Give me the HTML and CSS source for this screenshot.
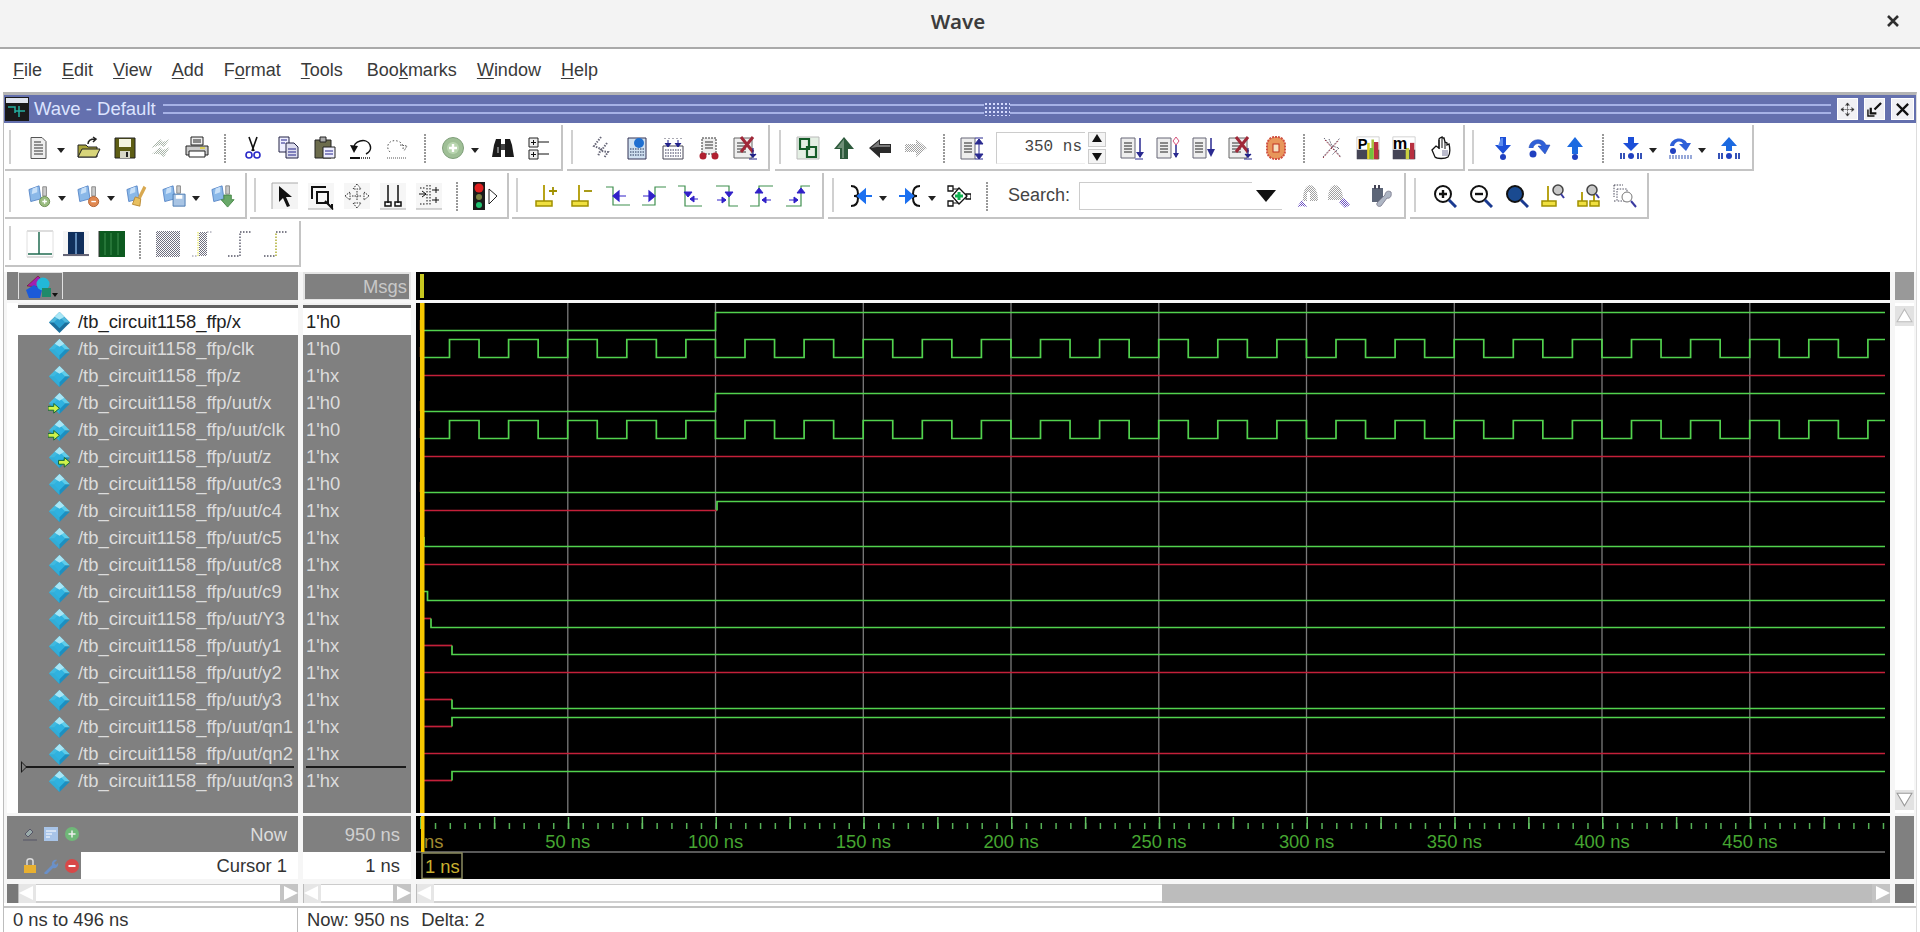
FILE: index.html
```html
<!DOCTYPE html>
<html lang="en">
<head>
<meta charset="utf-8">
<title>Wave</title>
<link rel="stylesheet" href="styles.css">
</head>
<body>
<svg class="defs" aria-hidden="true">
<defs>
<pattern id="dith" width="2" height="2" patternUnits="userSpaceOnUse"><rect width="1" height="1" fill="#6f7080"/><rect x="1" y="1" width="1" height="1" fill="#6f7080"/></pattern>
<pattern id="dithl" width="2" height="2" patternUnits="userSpaceOnUse"><rect width="1" height="1" fill="#a0a0a0"/><rect x="1" y="1" width="1" height="1" fill="#a0a0a0"/></pattern>
<pattern id="dithg" width="2" height="2" patternUnits="userSpaceOnUse"><rect width="1" height="1" fill="#a8b4a8"/><rect x="1" y="1" width="1" height="1" fill="#a8b4a8"/></pattern>
<pattern id="dithp" width="2" height="2" patternUnits="userSpaceOnUse"><rect width="1" height="1" fill="#6a50c0"/><rect x="1" y="1" width="1" height="1" fill="#6a50c0"/></pattern>
<symbol id="doc" viewBox="0 0 24 24"><path d="M4 1.5h11l4 4v17H4z" fill="#eee" stroke="#555"/><path d="M7 6h7M7 9h9M7 12h9M7 15h9M7 18h9" stroke="#333"/></symbol>
<symbol id="open" viewBox="0 0 24 24"><path d="M1 21V9h8l2 2h9v10z" fill="#a9a43a" stroke="#222"/><path d="M1 21l4-8h18l-4 8z" fill="#d8d57a" stroke="#222"/><path d="M11 8c0-4 4-5 7-5M16 1l3 2-3 3" fill="none" stroke="#222" stroke-width="1.5"/></symbol>
<symbol id="save" viewBox="0 0 24 24"><path d="M2 2h20v20H2z" fill="#5d5d14" stroke="#222"/><path d="M6 3h12v8H6z" fill="#f4f4e0"/><path d="M7 15h10v7H7z" fill="#d8d8c8"/><path d="M13 16h2v5h-2z" fill="#222"/></symbol>
<symbol id="reload" viewBox="0 0 24 24"><path d="M2 12l9-9 3 3 7-3-6 8-4-2zM3 18l8-7 3 3 7-3-6 10-5-3z" fill="url(#dithg)"/></symbol>
<symbol id="print" viewBox="0 0 24 24"><path d="M6 1h12v8H6z" fill="#eee" stroke="#222"/><path d="M1 10h22v9H1z" fill="#ccc" stroke="#222"/><path d="M4 15h16v6H4z" fill="#fff" stroke="#222"/><path d="M8 4h8M8 6h8" stroke="#222"/><path d="M15 11h5v2h-5z" fill="#dcd05a"/></symbol>
<symbol id="cut" viewBox="0 0 24 24"><path d="M8 1l5 14M16 1l-5 14" stroke="#111" stroke-width="1.6"/><circle cx="8" cy="19" r="3" fill="none" stroke="#2b2bc8" stroke-width="1.6"/><circle cx="16" cy="19" r="3" fill="none" stroke="#2b2bc8" stroke-width="1.6"/></symbol>
<symbol id="copy" viewBox="0 0 24 24"><path d="M2 1h10v15H2z" fill="#eef" stroke="#224"/><path d="M9 7h8l4 4v11H9z" fill="#dde" stroke="#224"/><path d="M4 4h6M4 7h4M11 13h8M11 16h8M11 19h8" stroke="#228"/></symbol>
<symbol id="paste" viewBox="0 0 24 24"><path d="M2 4h16v18H2z" fill="#6c6c4c" stroke="#222"/><path d="M7 1h6v5H7z" fill="#aaa" stroke="#222"/><path d="M10 11h12v11H10z" fill="#eef" stroke="#222"/><path d="M12 15h8M12 18h8" stroke="#228"/></symbol>
<symbol id="undo" viewBox="0 0 24 24"><path d="M5 13C3 5 18 1 21 9c2 5-2 8-4 9" fill="none" stroke="#111" stroke-width="1.5"/><path d="M1 9l8 1-4 7z" fill="#111"/><path d="M1 22h10" stroke="#111" stroke-width="2"/><path d="M12 22h10" stroke="#555" stroke-dasharray="1 1" stroke-width="2"/></symbol>
<symbol id="redo" viewBox="0 0 24 24"><path d="M18 13C20 5 6 1 3 9c-1 4 1 6 3 8" fill="none" stroke="#555" stroke-dasharray="1.5 2"/><path d="M15 9l7 1-3 5" fill="none" stroke="#555" stroke-dasharray="1.5 1"/><path d="M2 22h20" stroke="#555" stroke-dasharray="1 1"/></symbol>
<symbol id="add" viewBox="0 0 24 24"><circle cx="12" cy="12" r="10.5" fill="#9fbf96" stroke="#7f9f7a"/><circle cx="12" cy="12" r="6" fill="#b9d6b0"/><path d="M12 8v8M8 12h8" stroke="#fff" stroke-width="2.4"/></symbol>
<symbol id="binoc" viewBox="0 0 24 24"><path d="M1 21l2-12 2-6h5v18zM23 21l-2-12-2-6h-5v18z" fill="#1b1b1b"/><path d="M10 8h4v6h-4z" fill="#444"/><path d="M6 11h2v6H6z" fill="#777"/></symbol>
<symbol id="tree" viewBox="0 0 24 24"><path d="M2 2h9v9H2zM2 14h9v9H2z" fill="#eee" stroke="#222"/><path d="M4 6.5h5M6.500 4v5M4 18.500h5M6.500 16v5M11 6h11M11 18h11" stroke="#111"/></symbol>
<symbol id="brk" viewBox="0 0 24 24"><path d="M12 1L5 10l7 3-3 7M18 7l-6 8 7 1-4 6" fill="none" stroke="#667" stroke-dasharray="1.5 1.2" stroke-width="2"/></symbol>
<symbol id="t2" viewBox="0 0 24 24"><path d="M3 2h18v21H3z" fill="#cfe0f0" stroke="#335"/><path d="M5 13h14M5 16h14M5 19h14" stroke="#235" stroke-dasharray="1.500 1"/><circle cx="14" cy="7" r="5" fill="#1f6fd0"/></symbol>
<symbol id="t3" viewBox="0 0 24 24"><path d="M2 10h20v13H2z" fill="#fff" stroke="#445"/><path d="M4 14h16M4 17h16M4 20h16" stroke="#335" stroke-dasharray="1.500 1"/><path d="M4 2v1M8 2v1M12 2v1M16 2v1M20 2v1" stroke="#556"/><path d="M7 4v6M4 7l3 4 3-4M17 4v6M14 7l3 4 3-4" fill="#22228c" stroke="#22228c"/></symbol>
<symbol id="fork" viewBox="0 0 24 24"><path d="M5 2h14v16H5z" fill="#eee" stroke="#333" stroke-dasharray="2 1"/><path d="M8 6h8M8 9h8M8 12h8" stroke="#333"/><circle cx="6" cy="20" r="3.500" fill="#b02030"/><circle cx="18" cy="20" r="3.500" fill="#b02030"/></symbol>
<symbol id="docx" viewBox="0 0 24 24"><path d="M1 2h18v20H1z" fill="#eee" stroke="#666"/><path d="M4 7h8M4 10h9M4 13h9M4 16h9" stroke="#333"/><path d="M8 1l12 15M20 1L8 16" stroke="#a02838" stroke-width="3"/><path d="M20 12v10M17 18l3 3 3-3M16 23h8" fill="#228" stroke="#228" stroke-width="1.200"/></symbol>
<symbol id="chain" viewBox="0 0 24 24"><path d="M1 1h22v22H1z" fill="#e4efe4" stroke="#bbb"/><path d="M4 3h9v10H4zM11 11h9v10h-9z" fill="none" stroke="#145c28" stroke-width="2.200"/></symbol>
<symbol id="up" viewBox="0 0 24 24"><path d="M12 1l10 12h-6v10H8V13H2z" fill="#2d5a3c"/><path d="M12 3L5 12h5v10h2z" fill="#6f8f78"/></symbol>
<symbol id="lf" viewBox="0 0 24 24"><path d="M1 12L12 3v5h11v9H12v5z" fill="#2a2a2a"/><path d="M3 12l8-7v4h11v2H9z" fill="#7a7a7a"/></symbol>
<symbol id="rt" viewBox="0 0 24 24"><path d="M23 12l-11 9v-5H1V8h11V3z" fill="url(#dithl)"/></symbol>
<symbol id="dup" viewBox="0 0 24 24"><path d="M1 2h14v21H1z" fill="#eee" stroke="#667"/><path d="M4 7h8M4 10h8M4 13h8M4 16h8" stroke="#222"/><path d="M19 3v20M15 8l4-5 4 5zM15 18l4 5 4-5z" fill="#2a2a90" stroke="#2a2a90"/><path d="M15 2h8M15 23h8" stroke="#2a2a90"/></symbol>
<symbol id="ddn" viewBox="0 0 24 24"><path d="M1 2h14v20H1z" fill="#eee" stroke="#667"/><path d="M4 7h8M4 10h8M4 13h8M4 16h8" stroke="#222"/><path d="M20 2v19" stroke="#2a2a90" stroke-width="1.500"/><path d="M16 16l4 6 4-6z" fill="#2a2a90"/><path d="M15 23h8" stroke="#2a2a90"/></symbol>
<symbol id="dpk" viewBox="0 0 24 24"><path d="M1 2h14v20H1z" fill="#eee" stroke="#667"/><path d="M4 7h8M4 10h8M4 13h8M4 16h8" stroke="#222"/><path d="M20 1l3 4-3 4-3-4z" fill="#fff" stroke="#d6507a"/><path d="M20 9v12" stroke="#2a2a90" stroke-width="1.500"/><path d="M17 17l3 5 3-5z" fill="#2a2a90"/></symbol>
<symbol id="ddn2" viewBox="0 0 24 24"><path d="M1 2h13v20H1z" fill="#eee" stroke="#667"/><path d="M3 7h8M3 10h8M3 13h8M3 16h8" stroke="#222"/><path d="M19 2v16" stroke="#2a2a90" stroke-width="1.500"/><path d="M15 13l4 8 4-8z" fill="#2a2a90"/></symbol>
<symbol id="org" viewBox="0 0 24 24"><rect x="3" y="1" width="18" height="22" rx="8" fill="#e8965a" stroke="#d05040" stroke-width="2" stroke-dasharray="2 1"/><rect x="9" y="8" width="6" height="8" fill="#f6e0c0" stroke="#c03020"/></symbol>
<symbol id="xd" viewBox="0 0 24 24"><path d="M3 21L20 2M4 2l17 19M9 3l3 7 7 2-7 7" fill="none" stroke="#667" stroke-dasharray="1.500 1"/><path d="M3 22L19 4M5 4l16 18" stroke="#a03040" stroke-dasharray="1.500 1.500"/></symbol>
<symbol id="pch" viewBox="0 0 28 28"><path d="M1 1h26v26H1z" fill="#fff" stroke="#ccc"/><path d="M1 16h26v11H1z" fill="#445"/><path d="M13 8h3v19h-3z" fill="#e0d020"/><path d="M18 4h3v23h-3zM23 10h3v17h-3z" fill="#a8c040"/><path d="M21 7h5v20h-5z" fill="#b83040"/><path d="M16 14h4v13h-4z" fill="#70c040"/><text x="2" y="15" font-family="Liberation Sans,sans-serif" font-size="17" font-weight="700" fill="#000">P</text></symbol>
<symbol id="mch" viewBox="0 0 28 28"><path d="M1 1h26v26H1z" fill="#fff" stroke="#ccc"/><path d="M1 16h26v11H1z" fill="#445"/><path d="M21 8h5v19h-5z" fill="#b83040"/><path d="M16 14h4v13h-4z" fill="#c8d040"/><text x="1" y="15" font-family="Liberation Sans,sans-serif" font-size="19" font-weight="700" fill="#000">m</text></symbol>
<symbol id="hand" viewBox="0 0 24 24"><path d="M4 14l3 7c2 2 10 2 13 0 2-3 2-9 1-13l-2 1V7l-2-1-1-4-2 0v-1l-2 1-1 1v9L8 10z" fill="#fff" stroke="#111" stroke-width="1.300"/><path d="M11 4v9M14 3v9M17 6v7" stroke="#111"/><path d="M14 14h6v6h-6z" fill="#bbc"/></symbol>
<symbol id="bd" viewBox="0 0 24 24"><path d="M9 1h6v8h5L12 18 4 9h5z" fill="#1c4fd8"/><path d="M10 2h2v8H7z" fill="#5d8cf0"/><circle cx="12" cy="21" r="3" fill="#2040c0"/></symbol>
<symbol id="bc" viewBox="0 0 24 24"><path d="M2 12C3 2 16 1 19 9h4l-5 9-7-8h4c-2-4-8-3-9 2" fill="#2f60d8" stroke="#1a3fa8" stroke-width=".5"/><circle cx="6" cy="18" r="3.500" fill="#2040c0"/></symbol>
<symbol id="bu" viewBox="0 0 24 24"><path d="M12 1l8 10h-5v7H9v-7H4z" fill="#1c6ae0"/><circle cx="12" cy="21" r="3" fill="#2040c0"/></symbol>
<symbol id="bdb" viewBox="0 0 24 24"><path d="M9 1h6v6h5l-8 8-8-8h5z" fill="#1c4fd8"/><circle cx="12" cy="20" r="3" fill="#2040c0"/><path d="M2 17v6M5 17v6M19 17v6M22 17v6" stroke="#2040b0" stroke-width="1.800"/></symbol>
<symbol id="bcb" viewBox="0 0 24 24"><path d="M2 10C3 1 16 0 19 7h4l-5 8-7-7h4c-2-4-8-3-9 2" fill="#2f60d8"/><circle cx="5" cy="15" r="3" fill="#2040c0"/><path d="M2 19v4M5 19v4M8 19v4M11 19v4M14 19v4M17 19v4M20 19v4M23 19v4" stroke="#5470c0" stroke-width="1.200"/></symbol>
<symbol id="bub" viewBox="0 0 24 24"><path d="M12 1l8 9h-5v5H9v-5H4z" fill="#1c6ae0"/><circle cx="12" cy="20" r="3" fill="#2040c0"/><path d="M2 17v6M5 17v6M19 17v6M22 17v6" stroke="#2040b0" stroke-width="1.800"/></symbol>
<symbol id="fa" viewBox="0 0 26 26"><path d="M1 6l11-4 2 14-11 3z" fill="#8ab8e8" stroke="#5a88c8"/><path d="M5 5l5-2v6L4 11z" fill="#c8e0f8"/><path d="M16 3h4v10h-4z" fill="#ccc" stroke="#888"/><circle cx="18" cy="19" r="5.500" fill="#9abc80" stroke="#6a8c50"/><path d="M15.500 19h5M18 16.500v5" stroke="#fff" stroke-width="1.500"/></symbol>
<symbol id="fm" viewBox="0 0 26 26"><path d="M1 6l11-4 2 14-11 3z" fill="#8ab8e8" stroke="#5a88c8"/><path d="M5 5l5-2v6L4 11z" fill="#c8e0f8"/><path d="M16 3h4v10h-4z" fill="#ccc" stroke="#888"/><circle cx="18" cy="19" r="5.500" fill="#e08850" stroke="#b06030"/><path d="M15.500 19h5" stroke="#fff" stroke-width="1.500"/></symbol>
<symbol id="fb" viewBox="0 0 26 26"><path d="M1 6l11-4 2 14-11 3z" fill="#8ab8e8" stroke="#5a88c8"/><path d="M5 5l5-2v6L4 11z" fill="#c8e0f8"/><path d="M19 2l3 2-6 12-3-2z" fill="#d8a850"/><path d="M10 14l6 2-1 8-8-2z" fill="#e8c060" stroke="#b88830"/></symbol>
<symbol id="fs" viewBox="0 0 26 26"><path d="M1 6l11-4 2 14-11 3z" fill="#8ab8e8" stroke="#5a88c8"/><path d="M5 5l5-2v6L4 11z" fill="#c8e0f8"/><path d="M16 2h4v8h-4z" fill="#ccc" stroke="#888"/><path d="M12 11h13v13H12z" fill="#a8c4e4" stroke="#4878b0"/><path d="M15 12h7v4h-7z" fill="#fff"/></symbol>
<symbol id="fg" viewBox="0 0 26 26"><path d="M1 6l11-4 2 14-11 3z" fill="#8ab8e8" stroke="#5a88c8"/><path d="M5 5l5-2v6L4 11z" fill="#c8e0f8"/><path d="M16 2h4v9h-4z" fill="#ccc" stroke="#888"/><path d="M14 12h8v5h3l-7 8-7-8h3z" fill="#68a868" stroke="#488848"/></symbol>
<symbol id="ptr" viewBox="0 0 28 28"><path d="M1 1h26v26H1z" fill="#f4f4f4"/><path d="M1 27V1h26" fill="none" stroke="#aaa"/><path d="M8 4l13 11h-6l4 9-3 1-4-9-4 4z" fill="#111"/></symbol>
<symbol id="zbox" viewBox="0 0 28 28"><path d="M1 1h26v26H1z" fill="#f6f6f6"/><path d="M1 27h26" stroke="#aaa"/><path d="M5 17V5h14M10 10h11v11H10z" fill="none" stroke="#111" stroke-width="2"/><path d="M18 19l7 7v-4" fill="none" stroke="#111" stroke-width="2"/></symbol>
<symbol id="pan" viewBox="0 0 28 28"><path d="M1 1h26v26H1z" fill="#f6f6f6"/><path d="M14 2l-4 5h8zM14 26l-4-5h8zM2 14l5-4v8zM26 14l-5-4v8zM9 14h10M14 9v10" fill="#fff" stroke="#333" stroke-dasharray="1.500 1"/></symbol>
<symbol id="cur2" viewBox="0 0 28 28"><path d="M1 1h26v26H1z" fill="#f6f6f6"/><path d="M1 27h26" stroke="#aaa"/><path d="M9 3v18M19 3v18" stroke="#111" stroke-width="1.500"/><path d="M6 20h6v4H6zM16 20h6v4h-6z" fill="none" stroke="#111" stroke-width="1.500"/></symbol>
<symbol id="dot" viewBox="0 0 28 28"><path d="M1 1h26v26H1z" fill="#f6f6f6"/><path d="M1 27h26" stroke="#aaa"/><path d="M12 3v20M5 6h5M5 22h5M15 3v20" stroke="#111" stroke-dasharray="1.500 1.500"/><path d="M4 12h7M7 9l4 3-4 3M17 8h7M21 5v6M17 18h7M21 15v6" stroke="#111" fill="none"/></symbol>
<symbol id="traffic" viewBox="0 0 28 28"><path d="M2 0h12v28H2z" fill="#1a1a1a"/><circle cx="8" cy="6" r="4.500" fill="#e02020"/><circle cx="8" cy="15" r="3" fill="#7a8040"/><circle cx="8" cy="23" r="3" fill="#20c070"/><path d="M18 7l8 7-8 8z" fill="#fff" stroke="#222"/></symbol>
<symbol id="ya" viewBox="0 0 24 24"><path d="M10 1v17" stroke="#b09a00" stroke-width="1.800"/><path d="M2 17h16v5H2z" fill="#f0e040" stroke="#a09000" stroke-width="1.500"/><path d="M19 3v8M15 7h8" stroke="#a09000" stroke-width="1.800"/></symbol>
<symbol id="yd" viewBox="0 0 24 24"><path d="M9 1v17" stroke="#b09a00" stroke-width="1.800"/><path d="M2 17h16v5H2z" fill="#f0e040" stroke="#a09000" stroke-width="1.500"/><path d="M14 7h8" stroke="#a09000" stroke-width="1.800"/></symbol>
<symbol id="e1" viewBox="0 0 24 24"><path d="M0 3h7v18h17" fill="none" stroke="#3f8f4f" stroke-width="1.200"/><path d="M10 12h10M13 7l-6 5 6 5z" fill="#3020c8" stroke="#3020c8" stroke-width="1.200"/></symbol>
<symbol id="e2" viewBox="0 0 24 24"><path d="M0 21h13V3h11" fill="none" stroke="#3f8f4f" stroke-width="1.200"/><path d="M1 12h6M7 7l6 5-6 5z" fill="#3020c8" stroke="#3020c8" stroke-width="1.200"/></symbol>
<symbol id="e3" viewBox="0 0 24 24"><path d="M0 2h7v20h17" fill="none" stroke="#3f8f4f" stroke-width="1.200"/><path d="M6 8l4 5 4-5zM12 15h8M12 15l4-3v6z" fill="#3020c8" stroke="#3020c8"/></symbol>
<symbol id="e4" viewBox="0 0 24 24"><path d="M2 2h13v20h9" fill="none" stroke="#3f8f4f" stroke-width="1.200"/><path d="M11 8l4 5 4-5zM3 16h9M12 16l-4-3v6z" fill="#3020c8" stroke="#3020c8"/></symbol>
<symbol id="e5" viewBox="0 0 24 24"><path d="M0 22h9V2h14" fill="none" stroke="#3f8f4f" stroke-width="1.200"/><path d="M5 9l4-5 4 5zM12 16h9M12 16l4-3v6z" fill="#3020c8" stroke="#3020c8"/></symbol>
<symbol id="e6" viewBox="0 0 24 24"><path d="M0 22h15V2h9" fill="none" stroke="#3f8f4f" stroke-width="1.200"/><path d="M11 9l4-5 4 5zM3 16h9M12 16l-4-3v6z" fill="#3020c8" stroke="#3020c8"/></symbol>
<symbol id="mg" viewBox="0 0 24 24"><path d="M2 2c6 0 7 4 7 8 0 2-2 2-4 2 2 0 4 0 4 2 0 4-1 8-7 8" fill="none" stroke="#111" stroke-width="2"/><path d="M23 12h-9M16 6l-7 6 7 6z" fill="#1c70f0" stroke="#1c70f0" stroke-width="2"/></symbol>
<symbol id="sp" viewBox="0 0 24 24"><path d="M22 2c-6 0-7 4-7 8 0 2 2 2 4 2-2 0-4 0-4 2 0 4 1 8 7 8" fill="none" stroke="#111" stroke-width="2"/><path d="M1 12h8M8 6l7 6-7 6z" fill="#1c70f0" stroke="#1c70f0" stroke-width="2"/></symbol>
<symbol id="net" viewBox="0 0 24 24"><path d="M1 2h5v5H1zM1 17h5v5H1zM19 10h5v5h-5z" fill="#fff" stroke="#111" stroke-width="1.300"/><path d="M6 5h5M6 19h5M16 12h3" stroke="#111"/><path d="M12 4l8 8-8 8-7-8z" fill="#fff" stroke="#111" stroke-width="1.300"/><path d="M12 8v8M8 12h8" stroke="#10b050" stroke-width="3"/></symbol>
<symbol id="sr1" viewBox="0 0 24 24"><path d="M14 1c-5 1-7 6-7 16h4V8h3v9h8c0-10-3-15-8-16z" fill="url(#dithl)"/><path d="M1 23l5-7 5 7-5-1z" fill="url(#dithp)"/></symbol>
<symbol id="sr2" viewBox="0 0 24 24"><path d="M8 1C3 2 1 7 1 16h15c0-9-3-14-8-15z" fill="url(#dithl)"/><path d="M12 18l5-4 6 7-5 3z" fill="url(#dithp)"/></symbol>
<symbol id="wr" viewBox="0 0 24 24"><path d="M4 4h11v14H4z" fill="#5d6678"/><path d="M6 1h2v4H6zM10 1h2v4h-2z" fill="#445"/><path d="M23 8c-3-2-6 0-6 3l-8 8c-1 3 2 4 4 3l6-8c3 1 5-2 4-6z" fill="#aeb6c4" stroke="#889"/></symbol>
<symbol id="zi" viewBox="0 0 24 24"><circle cx="10" cy="10" r="8" fill="#fff" stroke="#111" stroke-width="2"/><path d="M6 10h8M10 6v8" stroke="#111" stroke-width="2.400"/><path d="M16 16l7 7" stroke="#1a3a90" stroke-width="3"/></symbol>
<symbol id="zo" viewBox="0 0 24 24"><circle cx="10" cy="10" r="8" fill="#fff" stroke="#111" stroke-width="2"/><path d="M6 10h8" stroke="#111" stroke-width="2.400"/><path d="M16 16l7 7" stroke="#1a3a90" stroke-width="3"/></symbol>
<symbol id="zf" viewBox="0 0 24 24"><circle cx="10" cy="10" r="8" fill="#1a4a90" stroke="#111" stroke-width="2"/><path d="M16 16l7 7" stroke="#1a3a90" stroke-width="3"/></symbol>
<symbol id="zc" viewBox="0 0 24 24"><path d="M7 2v15" stroke="#b09a00" stroke-width="1.800"/><path d="M1 17h14v5H1z" fill="#f0e040" stroke="#a09000" stroke-width="1.500"/><circle cx="17" cy="6" r="5" fill="#c8c8c8" stroke="#444" stroke-width="1.500"/><path d="M20 10l3 4" stroke="#3a3aa0" stroke-width="2"/></symbol>
<symbol id="zc2" viewBox="0 0 24 24"><path d="M5 8v9M17 8v9" stroke="#b09a00" stroke-width="1.800"/><path d="M1 17h9v5H1zM13 17h9v5h-9z" fill="#f0e040" stroke="#a09000" stroke-width="1.500"/><circle cx="15" cy="6" r="5" fill="#c8c8c8" stroke="#444" stroke-width="1.500"/><path d="M19 10l3 4" stroke="#3a3aa0" stroke-width="2"/></symbol>
<symbol id="zd" viewBox="0 0 24 24"><path d="M1 1h9M1 1v12M1 17h2" stroke="#445" stroke-dasharray="1.500 1.200" fill="none"/><path d="M4 5h10v12H4z" fill="none" stroke="#556" stroke-dasharray="1.500 1.200"/><circle cx="14" cy="13" r="5" fill="#fff" stroke="#777"/><path d="M18 17l5 6" stroke="#3a3aa0" stroke-width="2"/></symbol>
<symbol id="m1" viewBox="0 0 28 28"><path d="M1 1h26M1 27h26" stroke="#bbb"/><path d="M1 1v26M27 1v26" stroke="#e0e0e0"/><path d="M13 2v22M2 24h24" stroke="#226c52" stroke-width="1.500"/></symbol>
<symbol id="m2" viewBox="0 0 28 28"><path d="M1 1h26v26H1z" fill="#f6f6f6"/><path d="M6 2h16v23H6z" fill="#102f5c"/><path d="M13 3h2v22h-2z" fill="#5f89b8"/><path d="M1 25h26" stroke="#667" stroke-width="2"/></symbol>
<symbol id="m3" viewBox="0 0 28 28"><path d="M1 1h26v26H1z" fill="#0d5a20"/><path d="M7 3v22M13 3v22M20 3v22" stroke="#3f8f4f"/><path d="M1 1v26" stroke="#333"/></symbol>
<symbol id="m4" viewBox="0 0 28 28"><path d="M2 1h24v26H2z" fill="url(#dith)"/></symbol>
<symbol id="m5" viewBox="0 0 28 28"><path d="M9 2h8v24H9z" fill="url(#dith)"/><path d="M2 26h6M17 2h6" stroke="#889" stroke-dasharray="1.500 1.500"/><path d="M8 2v24" stroke="#e0e040" stroke-dasharray="1.500 1"/></symbol>
<symbol id="m6" viewBox="0 0 28 28"><path d="M2 26h12V2h12" fill="none" stroke="#556" stroke-width="1.400" stroke-dasharray="1.500 1.500"/></symbol>
<symbol id="m7" viewBox="0 0 28 28"><path d="M2 26h12" fill="none" stroke="#556" stroke-width="1.400" stroke-dasharray="1.500 1.500"/><path d="M14 26V2" stroke="#a8a820" stroke-width="1.400" stroke-dasharray="1.500 1.500"/><path d="M14 2h12" stroke="#556" stroke-width="1.400" stroke-dasharray="1.500 1.500"/></symbol>
<symbol id="sig" viewBox="0 0 24 24"><path d="M12 1l11 11H1z" fill="#5fcdea"/><path d="M1 12l11 11 11-11z" fill="#1c8fc0"/><path d="M12 1L1 12l11 11z" fill="#38b4dc" opacity=".8"/><path d="M12 6l6 6-6 6-6-6z" fill="#2fb2e0"/><path d="M12 1L7 6l5 3 5-3z" fill="#a8e6f6"/></symbol>
<symbol id="sig0" viewBox="0 0 24 24"><path d="M12 1l11 11-11 11L1 12z" fill="#1c6f9c"/><path d="M12 1L1 12h22z" fill="#4fb8dc"/><path d="M12 6l6 6-6 6-6-6z" fill="#2b9fd0"/><path d="M12 1L7 6l5 3 5-3z" fill="#a8e6f6"/></symbol>
<symbol id="sigin" viewBox="0 0 24 24"><use href="#sig"/><path d="M0 15h6v-3l6 5-6 5v-3H0z" fill="#cff24a" stroke="#163" stroke-width="1"/></symbol>
<symbol id="sigout" viewBox="0 0 24 24"><use href="#sig"/><path d="M11 15h6v-3l6 5-6 5v-3h-6z" fill="#cff24a" stroke="#163" stroke-width="1"/></symbol>
</defs>
</svg>

<header class="titlebar">
  <span class="title">Wave</span>
  <svg class="close" viewBox="0 0 14 14"><path d="M2 2l10 10M12 2L2 12"/></svg>
</header>
<nav class="menu">
  <span><u>F</u>ile</span><span><u>E</u>dit</span><span><u>V</u>iew</span><span><u>A</u>dd</span><span>F<u>o</u>rmat</span><span><u>T</u>ools</span><span class="bk">Boo<u>k</u>marks</span><span><u>W</u>indow</span><span><u>H</u>elp</span>
</nav>
<main class="dock">
  <div class="docktitle">
    <svg class="dockicon" viewBox="0 0 24 24"><path d="M0 0h24v24H0z" fill="#1a1a1a"/><path d="M1 1h22v5H1z" fill="#dfe4ee"/><path d="M3 10h7v6M14 9v11M10 14h10" fill="none" stroke="#25b0a0" stroke-width="1.500"/></svg>
    <span class="dockname">Wave - Default</span>
    <span class="lines"></span><span class="grip"></span><span class="lines"></span>
    <span class="dbtn"><svg viewBox="0 0 16 16"><path d="M8 1v14M1 8h14M8 1L6 3.500h4zM8 15l-2-2.500h4zM1 8l2.500-2v4zM15 8l-2.500-2v4z" fill="#333" stroke="#333" stroke-width=".8" stroke-dasharray="1.500 .8"/></svg></span>
    <span class="dbtn"><svg viewBox="0 0 16 16"><path d="M1 8v7h7" fill="none" stroke="#111" stroke-width="1.500"/><path d="M15 1L8 8M4 6v6h6" fill="none" stroke="#111" stroke-width="2.400"/></svg></span>
    <span class="dbtn wide"><svg viewBox="0 0 16 16"><path d="M2 2l12 12M14 2L2 14" stroke="#111" stroke-width="2.400"/></svg></span>
  </div>

  <div class="tbrow">
    <div class="tb w-r1a">
      <svg class="s"><use href="#doc"/></svg><i class="dd"></i><svg class="s"><use href="#open"/></svg><svg class="s"><use href="#save"/></svg><svg class="s"><use href="#reload"/></svg><svg class="s"><use href="#print"/></svg><b class="sep"></b><svg class="s"><use href="#cut"/></svg><svg class="s"><use href="#copy"/></svg><svg class="s"><use href="#paste"/></svg><svg class="s"><use href="#undo"/></svg><svg class="s"><use href="#redo"/></svg><b class="sep"></b><svg class="s"><use href="#add"/></svg><i class="dd"></i><svg class="s"><use href="#binoc"/></svg><svg class="s"><use href="#tree"/></svg>
    </div>
    <div class="tb w-r1b">
      <svg class="s"><use href="#brk"/></svg><svg class="s"><use href="#t2"/></svg><svg class="s"><use href="#t3"/></svg><svg class="s"><use href="#fork"/></svg><svg class="s"><use href="#docx"/></svg>
    </div>
    <div class="tb w-r1c">
      <svg class="s"><use href="#chain"/></svg><svg class="s"><use href="#up"/></svg><svg class="s"><use href="#lf"/></svg><svg class="s"><use href="#rt"/></svg><b class="sep"></b><svg class="s"><use href="#dup"/></svg>
      <span class="timebox">350 ns</span>
      <span class="spin"><i></i><i></i></span>
      <svg class="s after-spin"><use href="#ddn"/></svg><svg class="s"><use href="#dpk"/></svg><svg class="s"><use href="#ddn2"/></svg><svg class="s"><use href="#docx"/></svg><svg class="s"><use href="#org"/></svg><b class="sep"></b><svg class="s"><use href="#xd"/></svg><svg class="s"><use href="#pch"/></svg><svg class="s"><use href="#mch"/></svg><svg class="s"><use href="#hand"/></svg>
    </div>
    <div class="tb w-r1d">
      <svg class="s"><use href="#bd"/></svg><svg class="s"><use href="#bc"/></svg><svg class="s"><use href="#bu"/></svg><b class="sep"></b><svg class="s"><use href="#bdb"/></svg><i class="dd n"></i><svg class="s"><use href="#bcb"/></svg><i class="dd n"></i><svg class="s"><use href="#bub"/></svg>
    </div>
  </div>

  <div class="tbrow">
    <div class="tb w-r2a">
      <svg class="s"><use href="#fa"/></svg><i class="dd n"></i><svg class="s"><use href="#fm"/></svg><i class="dd n"></i><svg class="s"><use href="#fb"/></svg><svg class="s"><use href="#fs"/></svg><i class="dd n"></i><svg class="s"><use href="#fg"/></svg>
    </div>
    <div class="tb w-r2b">
      <svg class="s big"><use href="#ptr"/></svg><svg class="s big"><use href="#zbox"/></svg><svg class="s big"><use href="#pan"/></svg><svg class="s big"><use href="#cur2"/></svg><svg class="s big"><use href="#dot"/></svg><b class="sep"></b><svg class="s big"><use href="#traffic"/></svg>
    </div>
    <div class="tb w-r2c">
      <svg class="s"><use href="#ya"/></svg><svg class="s"><use href="#yd"/></svg><svg class="s"><use href="#e1"/></svg><svg class="s"><use href="#e2"/></svg><svg class="s"><use href="#e3"/></svg><svg class="s"><use href="#e4"/></svg><svg class="s"><use href="#e5"/></svg><svg class="s"><use href="#e6"/></svg>
    </div>
    <div class="tb w-r2d">
      <svg class="s"><use href="#mg"/></svg><i class="dd n"></i><svg class="s"><use href="#sp"/></svg><i class="dd n"></i><svg class="s"><use href="#net"/></svg><b class="sep"></b>
      <span class="searchlabel">Search:</span><span class="searchbox"></span><span class="searchdrop"></span>
      <svg class="s after-drop"><use href="#sr1"/></svg><svg class="s tight"><use href="#sr2"/></svg><svg class="s loose"><use href="#wr"/></svg>
    </div>
    <div class="tb w-r2e">
      <svg class="s"><use href="#zi"/></svg><svg class="s"><use href="#zo"/></svg><svg class="s"><use href="#zf"/></svg><svg class="s"><use href="#zc"/></svg><svg class="s"><use href="#zc2"/></svg><svg class="s"><use href="#zd"/></svg>
    </div>
  </div>

  <div class="tbrow">
    <div class="tb w-r3">
      <svg class="s big"><use href="#m1"/></svg><svg class="s big"><use href="#m2"/></svg><svg class="s big"><use href="#m3"/></svg><b class="sep"></b><svg class="s big"><use href="#m4"/></svg><svg class="s big"><use href="#m5"/></svg><svg class="s big"><use href="#m6"/></svg><svg class="s big"><use href="#m7"/></svg>
    </div>
  </div>

  <section class="panes">
    <!-- header row -->
    <div class="hd-names"><span class="hdicon"><svg viewBox="0 0 34 26"><path d="M3 13L14 3l8 8-6 3z" fill="#a020b0" stroke="#700" stroke-width=".5"/><path d="M2 17l8-5 8 5-2 8H5z" fill="#1b5ad8"/><circle cx="19" cy="11" r="6.500" fill="#22b8d8"/><path d="M18 15h9v9h-9z" fill="#208a6a"/><path d="M28 20h6l-3 4z" fill="#111"/></svg></span></div>
    <div class="hd-vals"><span>Msgs</span></div>
    <div class="hd-wave"><i class="cursor-top"></i></div>
    <div class="hd-v"></div>

    <!-- body row -->
    <div class="names">
      <div class="strip"></div>
      <div class="list">
        <div class="band"></div>
        <div class="row sel"><svg class="ic"><use href="#sig0"/></svg>/tb_circuit1158_ffp/x</div>
        <div class="row"><svg class="ic"><use href="#sig"/></svg>/tb_circuit1158_ffp/clk</div>
        <div class="row"><svg class="ic"><use href="#sig"/></svg>/tb_circuit1158_ffp/z</div>
        <div class="row"><svg class="ic"><use href="#sigin"/></svg>/tb_circuit1158_ffp/uut/x</div>
        <div class="row"><svg class="ic"><use href="#sigin"/></svg>/tb_circuit1158_ffp/uut/clk</div>
        <div class="row"><svg class="ic"><use href="#sigout"/></svg>/tb_circuit1158_ffp/uut/z</div>
        <div class="row"><svg class="ic"><use href="#sig"/></svg>/tb_circuit1158_ffp/uut/c3</div>
        <div class="row"><svg class="ic"><use href="#sig"/></svg>/tb_circuit1158_ffp/uut/c4</div>
        <div class="row"><svg class="ic"><use href="#sig"/></svg>/tb_circuit1158_ffp/uut/c5</div>
        <div class="row"><svg class="ic"><use href="#sig"/></svg>/tb_circuit1158_ffp/uut/c8</div>
        <div class="row"><svg class="ic"><use href="#sig"/></svg>/tb_circuit1158_ffp/uut/c9</div>
        <div class="row"><svg class="ic"><use href="#sig"/></svg>/tb_circuit1158_ffp/uut/Y3</div>
        <div class="row"><svg class="ic"><use href="#sig"/></svg>/tb_circuit1158_ffp/uut/y1</div>
        <div class="row"><svg class="ic"><use href="#sig"/></svg>/tb_circuit1158_ffp/uut/y2</div>
        <div class="row"><svg class="ic"><use href="#sig"/></svg>/tb_circuit1158_ffp/uut/y3</div>
        <div class="row"><svg class="ic"><use href="#sig"/></svg>/tb_circuit1158_ffp/uut/qn1</div>
        <div class="row"><svg class="ic"><use href="#sig"/></svg>/tb_circuit1158_ffp/uut/qn2</div>
        <div class="row"><svg class="ic"><use href="#sig"/></svg>/tb_circuit1158_ffp/uut/qn3</div>
        <div class="insert-n"></div>
      </div>
    </div>
    <div class="vals">
      <div class="band"></div>
      <div class="row sel">1'h0</div><div class="row">1'h0</div><div class="row">1'hx</div><div class="row">1'h0</div><div class="row">1'h0</div><div class="row">1'hx</div><div class="row">1'h0</div><div class="row">1'hx</div><div class="row">1'hx</div><div class="row">1'hx</div><div class="row">1'hx</div><div class="row">1'hx</div><div class="row">1'hx</div><div class="row">1'hx</div><div class="row">1'hx</div><div class="row">1'hx</div><div class="row">1'hx</div><div class="row">1'hx</div>
      <div class="insert-v"></div>
    </div>
    <svg class="wave" viewBox="416 303 1474 510" preserveAspectRatio="none">
      <path class="grid" d="M567.8 303V813M715.5 303V813M863.3 303V813M1011 303V813M1158.800 303V813M1306.500 303V813M1454.300 303V813M1602 303V813M1749.800 303V813"/>
      <path class="glitch" d="M420.500 320V330M420.500 347V357M420.500 401V411M420.500 428V438M420.500 482V492"/>
      <path class="g" d="M424 330.500H715.500V312.500H1885"/>
      <path class="g" id="clk1" d="M424 357.500H449.500V339.500h29.550V357.500h29.550V339.500h29.550V357.500h29.550V339.500h29.550V357.500h29.550V339.500h29.550V357.500h29.550V339.500h29.550V357.500h29.550V339.500h29.550V357.500h29.550V339.500h29.550V357.500h29.550V339.500h29.550V357.500h29.550V339.500h29.550V357.500h29.550V339.500h29.550V357.500h29.550V339.500h29.550V357.500h29.550V339.500h29.550V357.500h29.550V339.500h29.550V357.500h29.550V339.500h29.550V357.500h29.550V339.500h29.550V357.500h29.550V339.500h29.550V357.500h29.550V339.500h29.550V357.500h29.550V339.500h29.550V357.500h29.550V339.500h29.550V357.500h29.550V339.500h29.550V357.500h29.550V339.500h29.550V357.500h29.550V339.500h29.550V357.500h29.550V339.500h29.550V357.500h29.550V339.500h29.550V357.500h29.550V339.500H1885"/>
      <path class="r" d="M424 375.500H1885"/>
      <path class="g" d="M424 411.500H715.500V393.500H1885"/>
      <use href="#clk1" y="81"/>
      <path class="r" d="M424 456.500H1885"/>
      <path class="g" d="M424 492.500H1885"/>
      <path class="r" d="M424 510.500H717"/>
      <path class="g" d="M717 510.500V501.500H1885"/>
      <path class="g" d="M424 537V546.500H1885"/>
      <path class="r" d="M424 564.500H1885"/>
      <path class="g" d="M424 591.500H427.500V600.500H1885"/>
      <path class="r" d="M424 618.500H431"/>
      <path class="g" d="M431 618.500V627.500H1885"/>
      <path class="r" d="M424 645.500H452"/>
      <path class="g" d="M452 645.500V654.500H1885"/>
      <path class="r" d="M424 672.500H1885"/>
      <path class="r" d="M424 699.500H452"/>
      <path class="g" d="M452 699.500V708.500H1885"/>
      <path class="r" d="M424 726.500H452"/>
      <path class="g" d="M452 726.500V717.500H1885"/>
      <path class="r" d="M424 753.500H1885"/>
      <path class="r" d="M424 780.500H452"/>
      <path class="g" d="M452 780.500V771.500H1885"/>
      <rect class="cursor" x="420" y="303" width="4.500" height="510"/>
    </svg>
    <div class="vtrack">
      <span class="varrow"><svg viewBox="0 0 18 18"><path d="M9 3l7 12H2z" fill="#fff" stroke="#bbb"/></svg></span>
      <span class="vmid"></span>
      <span class="varrow"><svg viewBox="0 0 18 18"><path d="M9 15l7-12H2z" fill="#fff" stroke="#999"/></svg></span>
    </div>

    <!-- footer row -->
    <div class="ft-names">
      <div class="ft-row now">
        <span class="fi-box"><svg class="fi" viewBox="0 0 16 16"><path d="M3 8l5-5 3 3-5 5zM1 14h14" fill="#9aa" stroke="#556"/></svg><svg class="fi" viewBox="0 0 16 16"><path d="M1 1h14v14H1z" fill="#a8c4e8"/><path d="M3 5h10M3 8h6M3 11h4" stroke="#fff"/></svg><svg class="fi" viewBox="0 0 16 16"><circle cx="8" cy="8" r="7" fill="#6fb878"/><path d="M8 4.500v7M4.500 8h7" stroke="#eee" stroke-width="1.500"/></svg></span>
        <span class="ft-label">Now</span>
      </div>
      <div class="ft-row cur">
        <span class="fi-box"><svg class="fi" viewBox="0 0 16 16"><path d="M2 7h12v8H2z" fill="#e8b030"/><path d="M5 7V3c0-3 6-3 6 0v4" fill="none" stroke="#ddd" stroke-width="1.500"/></svg><svg class="fi" viewBox="0 0 16 16"><path d="M1 15l8-8c-1-3 2-6 5-5l-3 3 2 2 2-2c1 3-2 6-5 5l-7 7z" fill="#6a90c8"/></svg><svg class="fi" viewBox="0 0 16 16"><circle cx="8" cy="8" r="7" fill="#d84848"/><path d="M4.500 8h7" stroke="#fff" stroke-width="2"/></svg></span>
        <span class="ft-label white">Cursor 1</span>
      </div>
    </div>
    <div class="ft-vals">
      <div class="ftv now">950 ns</div>
      <div class="ftv cur">1 ns</div>
    </div>
    <svg class="ruler" viewBox="416 816 1474 63" preserveAspectRatio="none">
      <path class="rline" d="M416 852H1885"/>
      <line class="tickm" x1="420" x2="1885" y1="826" y2="826"/>
      <line class="tickj" x1="420" x2="1885" y1="823" y2="823"/>
      <rect class="cursor" x="421" y="816" width="3.500" height="36"/>
      <text class="zero" x="424" y="848">ns</text>
      <g class="labels">
        <text x="567.800" y="848">50 ns</text><text x="715.500" y="848">100 ns</text><text x="863.300" y="848">150 ns</text><text x="1011" y="848">200 ns</text><text x="1158.800" y="848">250 ns</text><text x="1306.500" y="848">300 ns</text><text x="1454.300" y="848">350 ns</text><text x="1602" y="848">400 ns</text><text x="1749.800" y="848">450 ns</text>
      </g>
      <rect class="curbox" x="422" y="853" width="40" height="25.500"/>
      <text class="curtext" x="425" y="873">1 ns</text>
    </svg>
    <div class="ft-v"></div>

    <!-- scroll row -->
    <div class="hs names-hs"><i class="hs-gut"></i><span class="arr l"></span><span class="thumb"></span><span class="arr r"></span></div>
    <div class="hs"><span class="arr l"></span><span class="thumb"></span><span class="arr r"></span></div>
    <div class="hs wave-hs"><span class="arr l"></span><span class="thumb wave-thumb"></span><span class="trough"></span><span class="arr r"></span></div>
    <div class="corner"></div>
  </section>

  <footer class="status">
    <span class="st1">0 ns to 496 ns</span>
    <span class="st2">Now: 950 ns</span>
    <span class="st3">Delta: 2</span>
  </footer>
</main>
</body>
</html>
```
FILE: styles.css
```css
* { box-sizing: border-box; }
html, body { margin: 0; padding: 0; width: 1920px; height: 932px; overflow: hidden; background: #fff; }
body { font-family: "Liberation Sans", Arial, sans-serif; color: #333; }
.defs { width: 0; height: 0; display: block; overflow: hidden; }

.titlebar { height: 49px; background: #f3f3f3; border-bottom: 2px solid #a9a9a9; display: grid; grid-template-columns: 1fr auto 1fr; align-items: center; padding-bottom: 6px; }
.title { grid-column: 2; font-family: "Noto Sans", sans-serif; font-size: 20.5px; font-weight: 600; color: #3c3c3c; margin-left: -4px; }
.close { grid-column: 3; justify-self: end; width: 14px; height: 14px; margin-right: 20px; fill: none; stroke: #2e2e2e; stroke-width: 2.6px; }

.menu { height: 43px; display: flex; align-items: center; gap: 20px; padding: 0 0 1px 13px; font-size: 18px; color: #3a3a3a; background: #fff; }
.menu u { text-underline-offset: 2px; }
.menu .bk { margin-left: 4px; }

.dock { margin: 0 3px; height: 840px; border-top: 3px solid #b4b4b4; border-left: 1px solid #bdbdbd; border-right: 1px solid #ddd; }

.docktitle { height: 28px; background: #6470ae; display: flex; align-items: center; color: #dce3ff; }
.dockicon { width: 24px; height: 24px; margin-left: 1px; flex: none; }
.dockname { font-size: 18.5px; margin-left: 5px; width: 129px; white-space: nowrap; flex: none; }
.lines { flex: 1; height: 10px; border-top: 2px solid #a6b2e6; border-bottom: 2px solid #a6b2e6; }
.grip { flex: none; width: 26px; height: 14px; background-image: radial-gradient(#d6dcff 1px, transparent 1.2px); background-size: 4px 4px; }
.dbtn { flex: none; width: 21px; height: 22px; margin-left: 6px; background: #f0f0f4; border: 1px solid #fff; display: flex; align-items: center; justify-content: center; }
.dbtn svg { width: 15px; height: 15px; }
.dbtn.wide { width: 23px; margin-right: 2px; }

.tbrow { display: flex; height: 46px; margin-top: 2px; padding-left: 1px; gap: 4px; }
.tb { position: relative; height: 46px; display: flex; align-items: center; background: #fff; border-right: 2px solid #c4c4c4; border-bottom: 2px solid #c4c4c4; padding-top: 1px; }
.tb::before { content: ""; position: absolute; left: 4px; top: 5px; bottom: 5px; width: 2px; background: #d0d0d0; }
.s { flex: none; width: 24px; height: 24px; margin: 0 6px; }
.s.big { width: 28px; height: 28px; margin: 0 4px; }
.dd { flex: none; width: 14px; height: 20px; position: relative; }
.dd.n { width: 13px; }
.dd::after { content: ""; position: absolute; left: 0; top: 10px; border: 4.500px solid transparent; border-top: 5px solid #222; border-bottom: 0; }
.sep { flex: none; width: 20px; height: 30px; background: linear-gradient(#333 50%, transparent 50%) center / 2px 3px repeat-y; }

.w-r1a { padding-left: 16px; width: 558px; }
.w-r1b { padding-left: 16px; width: 203px; }
.w-r1c { padding-left: 15px; width: 690px; margin-left: 1px; }
.w-r1d { padding-left: 17px; width: 286px; margin-left: -1px; }
.w-r2a { padding-left: 17px; width: 242px; }
.w-r2b { padding-left: 17px; width: 259px; margin-left: -1px; }
.w-r2c { padding-left: 16px; width: 312px; margin-left: -1px; }
.w-r2d { padding-left: 15px; width: 578px; }
.w-r2e { padding-left: 17px; width: 239px; }
.w-r3 { padding-left: 17px; width: 296px; }

.timebox { flex: none; width: 89px; height: 32px; margin-left: 6px; border: 1px solid #ccc; border-right: 0; border-bottom-color: #eee; font-family: "Liberation Mono", monospace; font-size: 16px; text-align: right; padding: 5px 3px 0 0; color: #444; }
.spin { flex: none; width: 18px; height: 32px; margin-left: 3px; display: flex; flex-direction: column; gap: 2px; }
.spin i { flex: 1; position: relative; background: #f4f4f4; border: 1px solid #ccc; }
.spin i::after { content: ""; position: absolute; left: 3px; border: 5px solid transparent; }
.spin i:first-child::after { top: 1px; border-bottom: 8px solid #111; border-top: 0; }
.spin i:last-child::after { top: 3px; border-top: 8px solid #111; border-bottom: 0; }
.after-spin { margin-left: 14px; }

.searchlabel { flex: none; margin-left: 11px; width: 63px; font-size: 18px; color: #444; }
.searchbox { flex: none; margin-left: 8px; width: 173px; height: 28px; border: 1px solid #ccc; border-right: 0; }
.searchdrop { flex: none; width: 30px; height: 28px; position: relative; border-bottom: 1px solid #ccc; }
.searchdrop::after { content: ""; position: absolute; left: 4px; top: 8px; border: 10px solid transparent; border-top: 12px solid #111; border-bottom: 0; }
.after-drop { margin-left: 14px; }
.tight { margin-left: 1px; }
.loose { margin-left: 11px; }

.panes { display: grid; grid-template-columns: 291px 108px 1474px 19px; grid-template-rows: 28px 510px 63px 21px; column-gap: 5px; row-gap: 3px; padding-left: 3px; margin-top: 5px; background: #f6f6f6; }

.hd-names, .hd-vals, .hd-v { background: #808080; }
.hd-names { display: flex; padding-left: 11px; }
.hdicon { width: 45px; height: 27px; border: 1.500px solid #e0e0e0; border-bottom: 0; display: flex; align-items: center; justify-content: center; }
.hdicon svg { width: 36px; height: 26px; }
.hd-vals { border: 2px solid #e4e4e4; border-width: 2px 2px 1px 2px; text-align: right; font-size: 18.4px; color: #c8c8c8; padding: 2px 2px 0 0; }
.hd-wave { background: #000; display: flex; }
.cursor-top { width: 4px; height: 24px; margin: 2px 0 0 4px; background: #c8c820; }

.names { display: flex; height: 510px; }
.strip { width: 11px; background: #fff; }
.list { flex: 1; background: #808080; position: relative; }
.band { height: 5px; background: #606060; border-top: 2px solid #f0f0f0; }
.row { height: 27px; display: flex; align-items: center; font-size: 18.4px; color: #dcdcdc; white-space: nowrap; padding: 1px 0 0 30px; }
.row.sel { background: #fff; color: #222; }
.ic { width: 23px; height: 23px; margin-right: 7px; flex: none; }
.vals { background: #808080; position: relative; height: 510px; }
.vals .row { padding-left: 3px; width: 100%; }
.insert-n { position: absolute; left: 5px; top: 463px; width: 271px; height: 2px; background: #1a1a1a; }
.insert-n::before { content: ""; position: absolute; left: -2px; top: -5px; border: 6px solid transparent; border-left: 6px solid #1a1a1a; border-right: 0; }
.insert-n::after { content: ""; position: absolute; left: -1px; top: -3px; border: 4px solid transparent; border-left: 4px solid #808080; border-right: 0; }
.insert-v { position: absolute; left: 3px; top: 463px; width: 100px; height: 2px; background: #1a1a1a; }

.wave, .ruler { display: block; width: 1474px; background: #000; }
.wave { height: 510px; }
.ruler { height: 63px; }
.grid { stroke: #7a7a7a; stroke-width: 1.300; fill: none; }
.g { stroke: #52d24e; stroke-width: 1.700; fill: none; }
.r { stroke: #c4203a; stroke-width: 1.700; fill: none; }
.glitch { stroke: #b8661a; stroke-width: 1.500; fill: none; }
.cursor { fill: #f7c800; }
.rline { stroke: #777; stroke-width: 1.500; }
.tickm { stroke: #55b055; stroke-width: 6px; stroke-dasharray: 1.500 13.275; }
.tickj { stroke: #62c062; stroke-width: 12px; stroke-dasharray: 1.500 72.375; }
.labels text { font-size: 18.4px; fill: #46a632; text-anchor: middle; font-family: "Liberation Sans", sans-serif; }
.zero { font-size: 18.4px; fill: #a08a30; font-family: "Liberation Sans", sans-serif; }
.curbox { fill: #000; stroke: #8c8c60; stroke-width: 1.500; }
.curtext { font-size: 18.4px; fill: #c8b030; font-family: "Liberation Sans", sans-serif; }

.vtrack { display: flex; flex-direction: column; background: #fff; height: 510px; }
.varrow { height: 20px; background: #e2e2e2; margin: 3px 0; flex: none; }
.varrow svg { width: 19px; height: 19px; display: block; }
.vmid { flex: 1; background: #fff; }
.ft-v { background: #808080; }
.hd-v { background: #999; }

.ft-names { display: flex; flex-direction: column; background: #808080; }
.ft-row { display: flex; align-items: center; font-size: 18.4px; }
.ft-row.now { height: 36px; }
.ft-row.cur { height: 27px; }
.fi-box { width: 74px; flex: none; display: flex; gap: 5px; padding-left: 15px; }
.fi { width: 16px; height: 16px; flex: none; }
.ft-label { flex: 1; height: 100%; display: flex; align-items: center; justify-content: flex-end; padding: 1px 11px 0 0; color: #dcdcdc; }
.ft-label.white { background: #fff; color: #333; }
.ft-vals { background: #808080; font-size: 18.4px; }
.ftv { display: flex; align-items: center; justify-content: flex-end; padding: 1px 11px 0 0; color: #d0d0d0; }
.ftv.now { height: 36px; }
.ftv.cur { height: 27px; background: #fff; color: #333; }

.hs { display: flex; height: 19px; margin-top: 2px; background: #f4f4f4; }
.hs-gut { width: 11px; background: #787878; flex: none; }
.arr { flex: none; width: 18px; background: #e6e6e6; position: relative; }
.arr::after { content: ""; position: absolute; top: 2px; border: 7.500px solid transparent; }
.arr.l::after { left: 0; border-right: 14px solid #fff; border-left: 0; }
.arr.r::after { right: 0; border-left: 14px solid #fff; border-right: 0; }
.arr.l { border-left: 1px solid #bbb; }
.arr.r { background: #c4c4c4; }
.thumb { flex: 1; background: #fff; border-top: 1px solid #ccc; border-bottom: 2px solid #d0d0d0; }
.wave-thumb { flex: none; width: 728px; }
.trough { flex: 1; background: #bcbcbc; }
.corner { background: #787878; height: 19px; margin-top: 2px; }

.status { display: flex; align-items: center; height: 26px; margin-top: 3px; border-top: 2px solid #c4c4c4; font-size: 18.4px; color: #333; background: #fff; }
.st1 { width: 294px; padding-left: 9px; height: 100%; display: flex; align-items: center; border-right: 1px solid #bbb; }
.st2 { margin-left: 9px; }
.st3 { margin-left: 12px; }
```
